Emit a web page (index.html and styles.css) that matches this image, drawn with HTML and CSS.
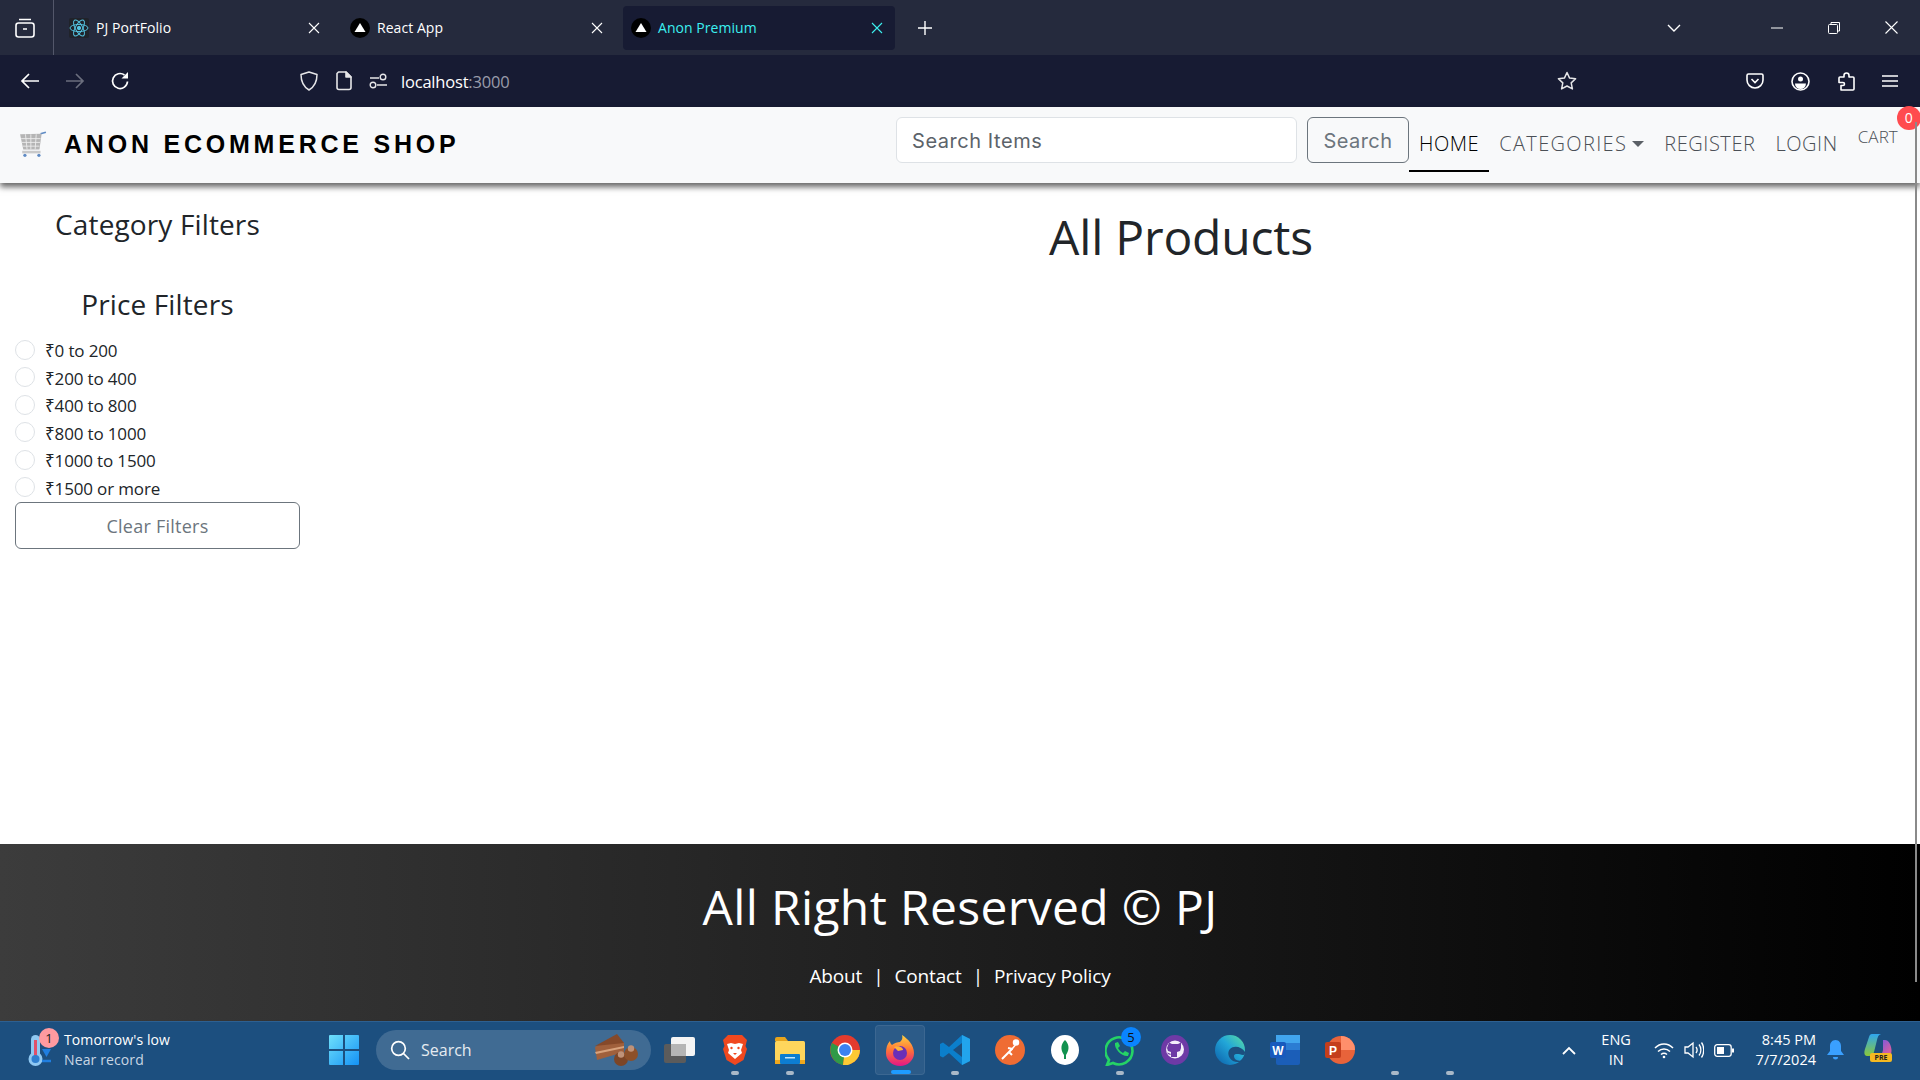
FILE: index.html
```html
<!DOCTYPE html>
<html lang="en">
<head>
<meta charset="utf-8">
<title>Anon Premium</title>
<link rel="stylesheet" href="styles.css">
</head>
<body>
<div class="screen">
  <header class="tabbar">
    <div class="tabs-btn">
      <svg width="20" height="20" viewBox="0 0 20 20" fill="none" stroke="#fff" stroke-width="1.6"><rect x="1" y="5" width="18" height="14" rx="2.5"/><path d="M4 1.5h12M8 11h4"/></svg>
    </div>
    <div class="tab tab-first">
      <svg class="fav" width="20" height="20" viewBox="0 0 20 20" fill="none" stroke="#53c1de" stroke-width="1"><rect width="20" height="20" rx="2" fill="#20232a" stroke="none"/><ellipse cx="10" cy="10" rx="9" ry="3.6"/><ellipse cx="10" cy="10" rx="9" ry="3.6" transform="rotate(60 10 10)"/><ellipse cx="10" cy="10" rx="9" ry="3.6" transform="rotate(120 10 10)"/><circle cx="10" cy="10" r="1.7" fill="#53c1de"/></svg>
      <span class="tab-title">PJ PortFolio</span>
      <svg class="x" width="12" height="12" viewBox="0 0 12 12" stroke="#fff" stroke-width="1.1"><path d="M1 1l10 10M11 1L1 11"/></svg>
    </div>
    <div class="tab">
      <svg class="fav" width="20" height="20" viewBox="0 0 20 20"><circle cx="10" cy="10" r="10" fill="#000"/><path d="M10 5l5.5 9h-11z" fill="#fff"/></svg>
      <span class="tab-title">React App</span>
      <svg class="x" width="12" height="12" viewBox="0 0 12 12" stroke="#fff" stroke-width="1.1"><path d="M1 1l10 10M11 1L1 11"/></svg>
    </div>
    <div class="tab tab-active">
      <svg class="fav" width="20" height="20" viewBox="0 0 20 20"><circle cx="10" cy="10" r="10" fill="#000"/><path d="M10 5l5.5 9h-11z" fill="#fff"/></svg>
      <span class="tab-title">Anon Premium</span>
      <svg class="x" width="12" height="12" viewBox="0 0 12 12" stroke="#3cf0f0" stroke-width="1.1"><path d="M1 1l10 10M11 1L1 11"/></svg>
    </div>
    <svg class="plus" width="16" height="16" viewBox="0 0 16 16" stroke="#fff" stroke-width="1.4"><path d="M8 1v14M1 8h14"/></svg>
    <div class="spacer"></div>
    <svg class="list-tabs" width="16" height="10" viewBox="0 0 16 10" fill="none" stroke="#fff" stroke-width="1.4"><path d="M2 2l6 6 6-6"/></svg>
    <div class="win-btns">
      <svg width="12" height="12" viewBox="0 0 12 12" stroke="#fff" stroke-width="1"><path d="M0 6h12"/></svg>
      <svg width="12" height="12" viewBox="0 0 12 12" fill="none" stroke="#fff" stroke-width="1"><rect x=".5" y="2.5" width="9" height="9" rx="1"/><path d="M3 2.5V.5h8.500v8.500h-2"/></svg>
      <svg width="13" height="13" viewBox="0 0 13 13" stroke="#fff" stroke-width="1.1"><path d="M.5.5l12 12M12.500.5l-12 12"/></svg>
    </div>
  </header>

  <div class="toolbar">
    <div class="tool-nav">
      <svg width="20" height="20" viewBox="0 0 20 20" fill="none" stroke="#fff" stroke-width="1.7"><path d="M19 10H2M9 3l-7 7 7 7"/></svg>
      <svg width="20" height="20" viewBox="0 0 20 20" fill="none" stroke="#6b6e7e" stroke-width="1.7"><path d="M1 10h17M11 3l7 7-7 7"/></svg>
      <svg width="20" height="20" viewBox="0 0 20 20" fill="none" stroke="#fff" stroke-width="1.7"><path d="M17.500 10.500a7.500 7.500 0 1 1-3-6.500"/><path d="M18 1v6.500h-6.500z" fill="#fff" stroke="none"/></svg>
    </div>
    <div class="url">
      <svg width="18" height="20" viewBox="0 0 18 20" fill="none" stroke="#e6e6e8" stroke-width="1.500" stroke-linejoin="round"><path d="M9 1l8 2.500c0 7-2 12-8 15.500C3 15.500 1 10.500 1 3.500z"/></svg>
      <svg width="16" height="20" viewBox="0 0 16 20" fill="none" stroke="#e6e6e8" stroke-width="1.600" stroke-linejoin="round"><path d="M2.500 1H10l5 5v10.500a2 2 0 0 1-2 2H3a2 2 0 0 1-2-2V2.500z"/><path d="M10 1v5h5z" fill="#e6e6e8"/></svg>
      <svg class="perm" width="18" height="16" viewBox="0 0 18 16" fill="none" stroke="#e6e6e8" stroke-width="1.400"><path d="M1 5h9M1 12h.5M8 12h10"/><circle cx="14" cy="4" r="2.800"/><circle cx="4" cy="12" r="2.800"/></svg>
      <span class="url-text">localhost<span class="url-port">:3000</span></span>
    </div>
    <div class="spacer"></div>
    <svg class="star" width="20" height="20" viewBox="0 0 20 20" fill="none" stroke="#e6e6e8" stroke-width="1.500" stroke-linejoin="round"><path d="M10 1.500l2.600 5.600 6 .7-4.400 4.100 1.200 6L10 15l-5.400 2.900 1.200-6L1.400 7.800l6-.7z"/></svg>
    <div class="tool-right">
      <svg width="18" height="18" viewBox="0 0 18 18" fill="none" stroke="#fff" stroke-width="1.600"><path d="M2.500 2h13A1.500 1.500 0 0 1 17 3.500v4.500a8 8 0 0 1-16 0V3.500A1.500 1.500 0 0 1 2.500 2z"/><path d="M5.500 7l3.500 3.500L12.500 7"/></svg>
      <svg width="19" height="19" viewBox="0 0 19 19" fill="none" stroke="#fff" stroke-width="1.600"><circle cx="9.500" cy="9.500" r="8.500"/><circle cx="9.500" cy="7" r="2.500" fill="#fff" stroke="none"/><path d="M4 11.500h11a5.500 5.500 0 0 1-11 0z" fill="#fff" stroke="none"/></svg>
      <svg width="18" height="19" viewBox="0 0 18 19" fill="none" stroke="#fff" stroke-width="1.600" stroke-linejoin="round"><path d="M7 5V3.500a2.500 2.500 0 0 1 5 0V5h4a1 1 0 0 1 1 1v11a1 1 0 0 1-1 1H4v-4.500h2a1.500 1.500 0 0 0 0-3H2V6a1 1 0 0 1 1-1z"/></svg>
      <svg width="16" height="14" viewBox="0 0 16 14" stroke="#fff" stroke-width="1.600"><path d="M0 2h16M0 7h16M0 12h16"/></svg>
    </div>
  </div>

  <nav class="navbar">
    <a class="brand">
      <svg class="brand-cart" width="28" height="26" viewBox="0 0 26 24" fill="none"><path d="M20 2.500l5-1.500" stroke="#5f8bc4" stroke-width="1.500"/><path d="M1 3l20-.5-2 14.500H4z" fill="#b5b5b5"/><path d="M2 7h18M2.500 10.500h17M3.500 14h15.500M6 3l1.500 14M11 3v14M16 3l-1 14" stroke="#efefef" stroke-width=".8"/><path d="M3 19.500h17" stroke="#c9c9c9" stroke-width="2.400"/><circle cx="5.500" cy="22.500" r="1.500" fill="#5f8bc4"/><circle cx="18.500" cy="22.500" r="1.500" fill="#5f8bc4"/></svg>
      <span class="brand-text">ANON ECOMMERCE SHOP</span>
    </a>
    <form class="search">
      <input class="search-input" type="search" placeholder="Search Items">
      <button class="search-btn" type="button">Search</button>
    </form>
    <ul class="nav-list">
      <li class="nav-item active">HOME</li>
      <li class="nav-item nav-cat">CATEGORIES<span class="caret"></span></li>
      <li class="nav-item">REGISTER</li>
      <li class="nav-item">LOGIN</li>
      <li class="nav-cart">CART<span class="badge">0</span></li>
    </ul>
  </nav>

  <main class="content">
    <aside class="filters">
      <h4 class="filter-title">Category Filters</h4>
      <h4 class="filter-title price-title">Price Filters</h4>
      <div class="radio-list">
        <label class="radio-row"><input type="radio" class="radio" name="p"><span>₹0 to 200</span></label>
        <label class="radio-row"><input type="radio" class="radio" name="p"><span>₹200 to 400</span></label>
        <label class="radio-row"><input type="radio" class="radio" name="p"><span>₹400 to 800</span></label>
        <label class="radio-row"><input type="radio" class="radio" name="p"><span>₹800 to 1000</span></label>
        <label class="radio-row"><input type="radio" class="radio" name="p"><span>₹1000 to 1500</span></label>
        <label class="radio-row"><input type="radio" class="radio" name="p"><span>₹1500 or more</span></label>
      </div>
      <button class="clear-btn" type="button">Clear Filters</button>
    </aside>
    <section class="products">
      <h1 class="products-title">All Products</h1>
    </section>
  </main>

  <footer class="footer">
    <h1 class="footer-title">All Right Reserved © PJ</h1>
    <p class="footer-links"><a>About</a><span>|</span><a>Contact</a><span>|</span><a>Privacy Policy</a></p>
  </footer>

  <div class="taskbar">
    <div class="weather">
      <div class="thermo">
        <svg width="34" height="38" viewBox="0 0 34 38" fill="none"><rect x="5" y="4" width="9" height="24" rx="4.500" fill="#8fc8f2"/><circle cx="9.500" cy="28" r="7" fill="#8fc8f2"/><rect x="8" y="9" width="3" height="17" fill="#e0506a"/><circle cx="9.500" cy="28" r="4" fill="#2f7fd0"/><path d="M16 18h9l-4.500 8z" fill="#1f7ee0"/><path d="M16 30h9" stroke="#1f7ee0" stroke-width="2.500"/></svg>
        <span class="weather-badge">1</span>
      </div>
      <div class="weather-text"><div class="w1">Tomorrow's low</div><div class="w2">Near record</div></div>
    </div>
    <svg class="winlogo" width="30" height="30" viewBox="0 0 30 30"><defs><linearGradient id="wg" x1="0" y1="0" x2="1" y2="1"><stop offset="0" stop-color="#6fe0fb"/><stop offset="1" stop-color="#1492f5"/></linearGradient></defs><path d="M0 1a1 1 0 0 1 1-1h13v14H0zM16 0h13a1 1 0 0 1 1 1v13H16zM0 16h14v14H1a1 1 0 0 1-1-1zM16 16h14v13a1 1 0 0 1-1 1H16z" fill="url(#wg)"/></svg>
    <div class="tb-search">
      <svg width="20" height="20" viewBox="0 0 20 20" fill="none" stroke="#fff" stroke-width="1.700"><circle cx="8.500" cy="8.500" r="6.800"/><path d="M13.500 13.500l5.500 5.500"/></svg>
      <span class="tb-search-text">Search</span>
      <svg class="cake" width="46" height="34" viewBox="0 0 46 34"><path d="M2 14L24 3l7 7v9L4 27z" fill="#a0603c"/><path d="M2 19l29-6v2L3 21z" fill="#d8a27c"/><path d="M2 13L24 1l7 9z" fill="#85492a"/><circle cx="28" cy="26" r="7" fill="#7c4526"/><circle cx="38" cy="21" r="7" fill="#8d5029"/><circle cx="28" cy="21.500" r="3.200" fill="#bf9278"/><circle cx="38" cy="15.500" r="3.200" fill="#bf9278"/></svg>
    </div>
    <div class="task-icons">
      <div class="task">
        <svg width="31" height="26" viewBox="0 0 31 26"><rect x="0" y="7" width="22" height="19" rx="2" fill="#5b5b5b"/><rect x="7" y="0" width="24" height="19" rx="2" fill="#f4f4f4"/><rect x="7" y="7" width="15" height="12" fill="#b5b5b5"/></svg>
      </div>
      <div class="task open">
        <svg width="26" height="30" viewBox="0 0 26 30"><path d="M6 0h14l5 5-1.500 6 1.500 3-3.500 11L13 30 4.500 25 1 14l1.500-3L1 5z" fill="#f0481f"/><path d="M5 9l4-1 4 1 4-1 4 1-2 6 1 3-7 6-7-6 1-3z" fill="#fff"/><circle cx="9.500" cy="13" r="1.200" fill="#f0481f"/><circle cx="16.500" cy="13" r="1.200" fill="#f0481f"/><path d="M11 18h4l-2 2z" fill="#f0481f"/></svg>
      </div>
      <div class="task open">
        <svg width="30" height="27" viewBox="0 0 30 27"><path d="M0 2a2 2 0 0 1 2-2h8l3 4h-13z" fill="#e7a41c"/><rect y="4" width="30" height="23" rx="1.500" fill="#ffd65c"/><rect y="23" width="30" height="4" fill="#f0a81e"/><rect x="5" y="17" width="20" height="10" rx="1" fill="#0d7dd1"/><rect x="10" y="20" width="10" height="1.500" fill="#bfe5ff"/></svg>
      </div>
      <div class="task">
        <svg width="30" height="30" viewBox="0 0 30 30"><circle cx="15" cy="15" r="15" fill="#e33b2e"/><path d="M15 15L2 8A15 15 0 0 0 13 29.900z" fill="#2f9a48"/><path d="M15 15H30a15 15 0 0 1-17 14.900z" fill="#fcc934"/><circle cx="15" cy="15" r="7.500" fill="#fff"/><circle cx="15" cy="15" r="6" fill="#3b82f0"/></svg>
      </div>
      <div class="task running">
        <svg width="30" height="32" viewBox="0 0 30 32"><defs><linearGradient id="fx" x1="0" y1="0" x2="0" y2="1"><stop offset="0" stop-color="#ffd23f"/><stop offset=".5" stop-color="#ff7139"/><stop offset="1" stop-color="#e31587"/></linearGradient></defs><path d="M17 1c6 4 12 10 12 18a14 13 0 0 1-28 0c0-5 1-9 4-12 0 2 1 3 2 4 2-2 6-3 8-3 2-2 3-4 2-7z" fill="url(#fx)"/><circle cx="15" cy="19" r="7" fill="#6a2fb8"/><path d="M9 13c4-2 9 0 9 3l-5 1z" fill="#ffb23a"/></svg>
        <span class="ind-active"></span>
      </div>
      <div class="task open">
        <svg width="30" height="30" viewBox="0 0 30 30"><path d="M22 0l8 4v22l-8 4-13-12-6 4.500L0 21V9l3-1.500L9 12z" fill="#0b7fcc"/><path d="M22 0l8 4v22l-8 4z" fill="#22a4ec"/><path d="M22 8l-9 7 9 7z" fill="#1c4f7f"/></svg>
      </div>
      <div class="task">
        <svg width="30" height="30" viewBox="0 0 30 30"><circle cx="15" cy="15" r="15" fill="#ef6c33"/><path d="M7 24l10-10M14 17l3 3M13 13l5 1" stroke="#fff" stroke-width="2" fill="none"/><path d="M17 14l5-6M21 5a2.500 2.500 0 1 1 0 5 2.500 2.500 0 0 1 0-5z" fill="#fff" stroke="#fff" stroke-width="1.500"/></svg>
      </div>
      <div class="task">
        <svg width="28" height="30" viewBox="0 0 28 30"><ellipse cx="14" cy="15" rx="14" ry="15" fill="#fff"/><path d="M14 5c4 4 5 9 1 15v4h-2v-4c-4-6-3-11 1-15z" fill="#12924f"/></svg>
      </div>
      <div class="task open">
        <svg width="30" height="32" viewBox="0 0 30 32" fill="none"><path d="M4 26l-2 5 6-2a13.500 13.500 0 1 0-4-3z" stroke="#25d366" stroke-width="2.600"/><path d="M10 9l3-1 2 4-2 2c1 2 3 4 5 5l2-2 4 2-1 3c-6 1-14-7-13-13z" fill="#25d366"/></svg>
        <span class="task-badge">5</span>
      </div>
      <div class="task">
        <svg width="28" height="30" viewBox="0 0 28 30"><ellipse cx="14" cy="15" rx="14" ry="15" fill="#6e3aa6"/><circle cx="14" cy="14.500" r="9" fill="#f4eefa"/><path d="M8 7.500l3 1.500h6l3-1.500v5.500l-1 3-3 1v5h-6v-2.500c-2 .5-3.500-.5-4-2l1.500.5 2.500 1v-2l-3-1-1-3z" fill="#6e3aa6"/></svg>
      </div>
      <div class="task">
        <svg width="30" height="30" viewBox="0 0 30 30"><defs><linearGradient id="eg" x1="0" y1="1" x2="1" y2="0"><stop offset="0" stop-color="#0b5da8"/><stop offset=".55" stop-color="#22a6d8"/><stop offset="1" stop-color="#5ce0a0"/></linearGradient></defs><circle cx="15" cy="15" r="15" fill="url(#eg)"/><path d="M30 17c-3-5-11-7-15-3-3 3-2 9 3 12 4 2 8 1 10-1-6 2-9-1-9-4s5-2 9-1c2 0 2-2 2-3z" fill="#1c4f7f"/></svg>
      </div>
      <div class="task">
        <svg width="30" height="30" viewBox="0 0 30 30"><rect x="6" width="24" height="30" rx="2" fill="#1b5eb8"/><rect x="6" width="24" height="8" fill="#41a5ee"/><rect x="6" y="8" width="24" height="7" fill="#2b7cd3"/><rect y="7" width="16" height="16" rx="2" fill="#185abd"/><text class="word-w" x="8" y="20" text-anchor="middle">W</text></svg>
      </div>
      <div class="task">
        <svg width="30" height="30" viewBox="0 0 30 30"><circle cx="16" cy="15" r="14" fill="#e8633a"/><path d="M16 1a14 14 0 0 1 14 14H16z" fill="#ff8f6b"/><rect y="7" width="16" height="16" rx="2" fill="#c43e1c"/><text class="word-w" x="8" y="20" text-anchor="middle">P</text></svg>
      </div>
      <div class="task open ghost"></div>
      <div class="task open ghost"></div>
    </div>
    <div class="spacer"></div>
    <div class="tray">
      <svg class="tray-up" width="14" height="9" viewBox="0 0 14 9" fill="none" stroke="#fff" stroke-width="1.800"><path d="M1 8l6-6 6 6"/></svg>
      <div class="lang"><div>ENG</div><div>IN</div></div>
      <svg width="20" height="17" viewBox="0 0 20 17" fill="none" stroke="#fff" stroke-width="1.500"><path d="M1 6c5-5.500 13-5.500 18 0M4 9.500c3.500-3.500 8.500-3.500 12 0M7 12.500c1.800-1.500 4.200-1.500 6 0"/><circle cx="10" cy="15" r="1.300" fill="#fff" stroke="none"/></svg>
      <svg width="20" height="18" viewBox="0 0 20 18" fill="none" stroke="#fff" stroke-width="1.300"><path d="M1 6h3l5-4v14l-5-4H1z"/><path d="M12 6c1.500 2 1.500 4 0 6M15 3.500c2.500 3 2.500 8 0 11M17.500 1.500c3 4 3 11 0 15"/></svg>
      <svg width="20" height="13" viewBox="0 0 20 13" fill="none" stroke="#fff" stroke-width="1.300"><rect x=".7" y=".7" width="16.500" height="11.600" rx="2.500"/><rect x="3" y="3" width="7" height="7" fill="#fff" stroke="none"/><path d="M19 4.500v4" stroke-width="2"/></svg>
      <div class="clock"><div>8:45 PM</div><div>7/7/2024</div></div>
      <svg class="bell" width="17" height="20" viewBox="0 0 17 20"><path d="M8.500 0c3.500 0 5.500 3 5.500 6v5l3 4H0l3-4V6c0-3 2-6 5.500-6z" fill="#3aa0ff"/><path d="M6 17h5a2.500 2.500 0 0 1-5 0z" fill="#3aa0ff"/></svg>
      <div class="copilot">
        <svg width="28" height="26" viewBox="0 0 28 26"><defs><linearGradient id="cp1" x1="0" y1="0" x2="0" y2="1"><stop offset="0" stop-color="#2fa6f0"/><stop offset="1" stop-color="#8ac83a"/></linearGradient><linearGradient id="cp2" x1="0" y1="0" x2="1" y2="1"><stop offset="0" stop-color="#6a58e8"/><stop offset="1" stop-color="#f06090"/></linearGradient></defs><path d="M8 0h10c-3 0-4 2-5 6l-3 12c-1 3-2 4-5 4H3C0 22 0 18 1 15L5 3c.5-2 1.500-3 3-3z" fill="url(#cp1)"/><path d="M19 6h2c3 0 5 3 6 7s1 9-4 9H14c3 0 4-2 5-6z" fill="url(#cp2)"/></svg>
        <span class="pre">PRE</span>
      </div>
    </div>
  </div>

  <div class="scrollbar-line"></div>
</div>
</body>
</html>
```

FILE: styles.css
```css
* { box-sizing: border-box; }
html, body { margin: 0; height: 100%; overflow: hidden; }
body { font-family: "Open Sans", "Noto Sans", sans-serif; background: #fff; }
.screen { position: relative; display: flex; flex-direction: column; width: 1920px; height: 1080px; }
.spacer { flex: 1; }

/* browser tab strip */
.tabbar { height: 55px; background: #252a3d; display: flex; align-items: center; color: #fff; font-size: 14px; flex: none; }
.tabs-btn { width: 54px; height: 55px; display: flex; align-items: center; justify-content: center; padding-right: 3px; border-right: 1px solid #53576a; flex: none; }
.tab { width: 280px; height: 44px; display: flex; align-items: center; padding: 0 12px 0 15px; flex: none; margin-right: 1px; }
.tab-first { padding-right: 14px; }
.tab-first .fav { margin-right: 6px; }
.tab .fav { flex: none; margin-right: 7px; }
.tab-title { flex: 1; font-family: "Open Sans", sans-serif; font-size: 14px; letter-spacing: .05px; }
.tab .x { flex: none; }
.tab-active { width: 272px; margin-left: 7px; background: #171b33; border-radius: 4px; color: #3cf0f0; padding: 0 12px 0 8px; }
.plus { margin-left: 21px; flex: none; }
.list-tabs { margin-right: 89px; }
.win-btns { display: flex; align-items: center; gap: 45px; margin-right: 22px; }

/* browser toolbar */
.toolbar { height: 52px; background: #171b33; display: flex; align-items: center; flex: none; color: #fff; }
.tool-nav { display: flex; gap: 25px; padding-left: 20px; align-items: center; }
.url { display: flex; align-items: center; margin-left: 170px; gap: 18px; }
.perm { margin-left: -1px; }
.url-text { margin-left: -4px; font-size: 16.500px; letter-spacing: -.2px; }
.url-port { color: #9a9caa; }
.star { margin-right: 169px; flex: none; }
.tool-right { display: flex; align-items: center; gap: 27px; margin-right: 22px; }

/* page navbar */
.navbar { height: 76px; background: #f8f9fa; display: flex; flex: none; box-shadow: 0 4px 6px rgba(0,0,0,.6); position: relative; z-index: 2; padding-left: 20px; }
.brand { display: flex; align-items: center; gap: 17px; width: 876px; flex: none; padding-bottom: 2px; }
.brand-cart { margin-left: -1px; flex: none; }
.brand-text { font-family: "Liberation Sans", Arial, sans-serif; font-weight: 700; font-size: 25px; letter-spacing: 3.780px; color: #000; white-space: nowrap; }
.search { display: flex; gap: 10px; padding-top: 10px; height: 56px; flex: none; }
.search-input { width: 401px; height: 46px; border: 1px solid #dee2e6; border-radius: 6px; background: #fff; padding: 2px 15px 0; font-family: Inter, sans-serif; font-size: 20px; letter-spacing: .55px; outline: none; }
.search-input::placeholder { color: #5c636a; }
.search-btn { width: 102px; height: 46px; border: 1px solid #6c757d; border-radius: 6px; background: transparent; color: #6c757d; font-family: Inter, sans-serif; font-size: 20px; letter-spacing: .4px; padding: 2px 0 0; }
.nav-list { list-style: none; margin: 0; padding: 0; display: flex; flex: none; font-family: "Open Sans", sans-serif; font-weight: 300; font-size: 20px; letter-spacing: .55px; color: #4b5056; }
.nav-item { padding: 23px 10px 0; height: 65px; white-space: nowrap; }
.nav-item.active { color: #000; border-bottom: 2px solid #000; height: 65px; }
.nav-cat { letter-spacing: 1.350px; }
.caret { display: inline-block; margin-left: 5px; vertical-align: 4px; border-top: 6px solid #5b6066; border-left: 6px solid transparent; border-right: 6px solid transparent; }
.nav-cart { position: relative; font-size: 17px; padding: 18px 0 0 10px; letter-spacing: .1px; }
.badge { position: absolute; left: 49px; top: -1px; width: 24px; height: 24px; border-radius: 50%; background: #ff4b4f; color: #fff; font-weight: 400; font-size: 14px; line-height: 24px; text-align: center; letter-spacing: 0; }

/* main */
.content { flex: 1; display: flex; background: #fff; min-height: 0; }
.filters { width: 300px; margin-left: 15px; flex: none; display: flex; flex-direction: column; color: #212529; }
.filter-title { margin: 0; text-align: center; font-size: 28px; font-weight: 400; line-height: 34px; letter-spacing: .13px; }
.filter-title:first-child { margin-top: 24px; width: 285px; }
.price-title { width: 285px; margin-top: 46px; }
.radio-list { display: flex; flex-direction: column; margin-top: 16px; }
.radio-row { display: flex; align-items: center; height: 27.500px; font-size: 17px; letter-spacing: -.15px; gap: 10px; }
.radio { appearance: none; width: 20px; height: 20px; margin: 0; border: 1px solid #dee2e6; border-radius: 50%; background: #fff; flex: none; position: relative; top: -1px; }
.clear-btn { width: 285px; height: 47px; margin-top: 0; border: 1px solid #6c757d; border-radius: 6px; background: #fff; color: #6c757d; font-family: inherit; font-size: 18px; letter-spacing: .25px; padding: 0; }
.products { flex: 1; padding-left: 127px; text-align: center; }
.products-title { margin: 20px 0 0; font-size: 48px; font-weight: 400; line-height: 68px; color: #212529; letter-spacing: -.2px; }

/* footer */
.footer { height: 177px; flex: none; background: linear-gradient(to right, #3c3c3c, #000); color: #fff; text-align: center; padding-top: 29px; }
.footer-title { margin: 0; font-size: 48px; font-weight: 400; line-height: 68px; letter-spacing: .35px; }
.footer-links { margin: 22px 0 0; font-size: 19px; line-height: 26px; display: flex; justify-content: center; gap: 11px; letter-spacing: -.15px; }

/* Windows taskbar */
.taskbar { height: 59px; flex: none; background: #1c4f7f; border-top: 1px solid #2d6091; display: flex; align-items: center; color: #fff; position: relative; padding-bottom: 2px; }
.weather { display: flex; align-items: center; width: 329px; padding-left: 26px; flex: none; }
.thermo { position: relative; width: 38px; height: 38px; flex: none; }
.weather-badge { position: absolute; left: 13px; top: -3px; width: 20px; height: 20px; border-radius: 50%; background: #ff9aa0; color: #222; font-size: 13px; line-height: 20px; text-align: center; }
.weather-text { font-size: 14px; line-height: 20px; letter-spacing: .12px; }
.w2 { color: #c9d6e3; }
.winlogo { flex: none; }
.tb-search { width: 275px; height: 40px; margin-left: 17px; border-radius: 20px; background: rgba(255,255,255,.16); display: flex; align-items: center; padding-left: 14px; flex: none; }
.tb-search-text { margin-left: 11px; font-size: 16px; flex: 1; color: #e6ebf1; }
.cake { margin-right: 12px; flex: none; }
.task-icons { display: flex; margin-left: 1px; }
.task { position: relative; width: 55px; height: 50px; display: flex; align-items: center; justify-content: center; flex: none; }
.task.open::after { content: ""; position: absolute; left: 24px; bottom: 0; width: 8px; height: 4px; border-radius: 2px; background: #a9b9c8; }
.task.running { background: rgba(255,255,255,.07); border: 1px solid rgba(255,255,255,.08); border-radius: 4px; width: 50px; margin: 0 2.500px; }
.ind-active { position: absolute; left: 15px; bottom: 0; width: 20px; height: 4px; border-radius: 2px; background: #1e9bff; }
.task-badge { position: absolute; left: 29px; top: 2px; width: 20px; height: 20px; border-radius: 50%; background: #0a84ff; color: #111; font-size: 13px; line-height: 20px; text-align: center; }
.word-w { font-family: "Liberation Sans", sans-serif; font-size: 12px; font-weight: 700; fill: #fff; }
.tray { display: flex; align-items: center; gap: 10px; margin-right: 26px; flex: none; }
.tray-up { margin-right: 11px; }
.lang { width: 38px; margin-right: 8.500px; text-align: center; font-size: 14.500px; line-height: 20px; }
.clock { margin-left: 12px; text-align: right; font-size: 14.500px; line-height: 20px; }
.bell { margin: 0 10px 0 1px; flex: none; }
.copilot { position: relative; width: 30px; height: 32px; }
.pre { position: absolute; left: 6px; top: 19px; width: 22px; height: 9px; border-radius: 2px; background: #f5b921; color: #222; font-size: 7px; line-height: 9px; text-align: center; font-weight: 700; }

.scrollbar-line { position: absolute; left: 1915px; top: 122px; width: 2px; height: 860px; background: #8a8a8a; z-index: 3; }
```
